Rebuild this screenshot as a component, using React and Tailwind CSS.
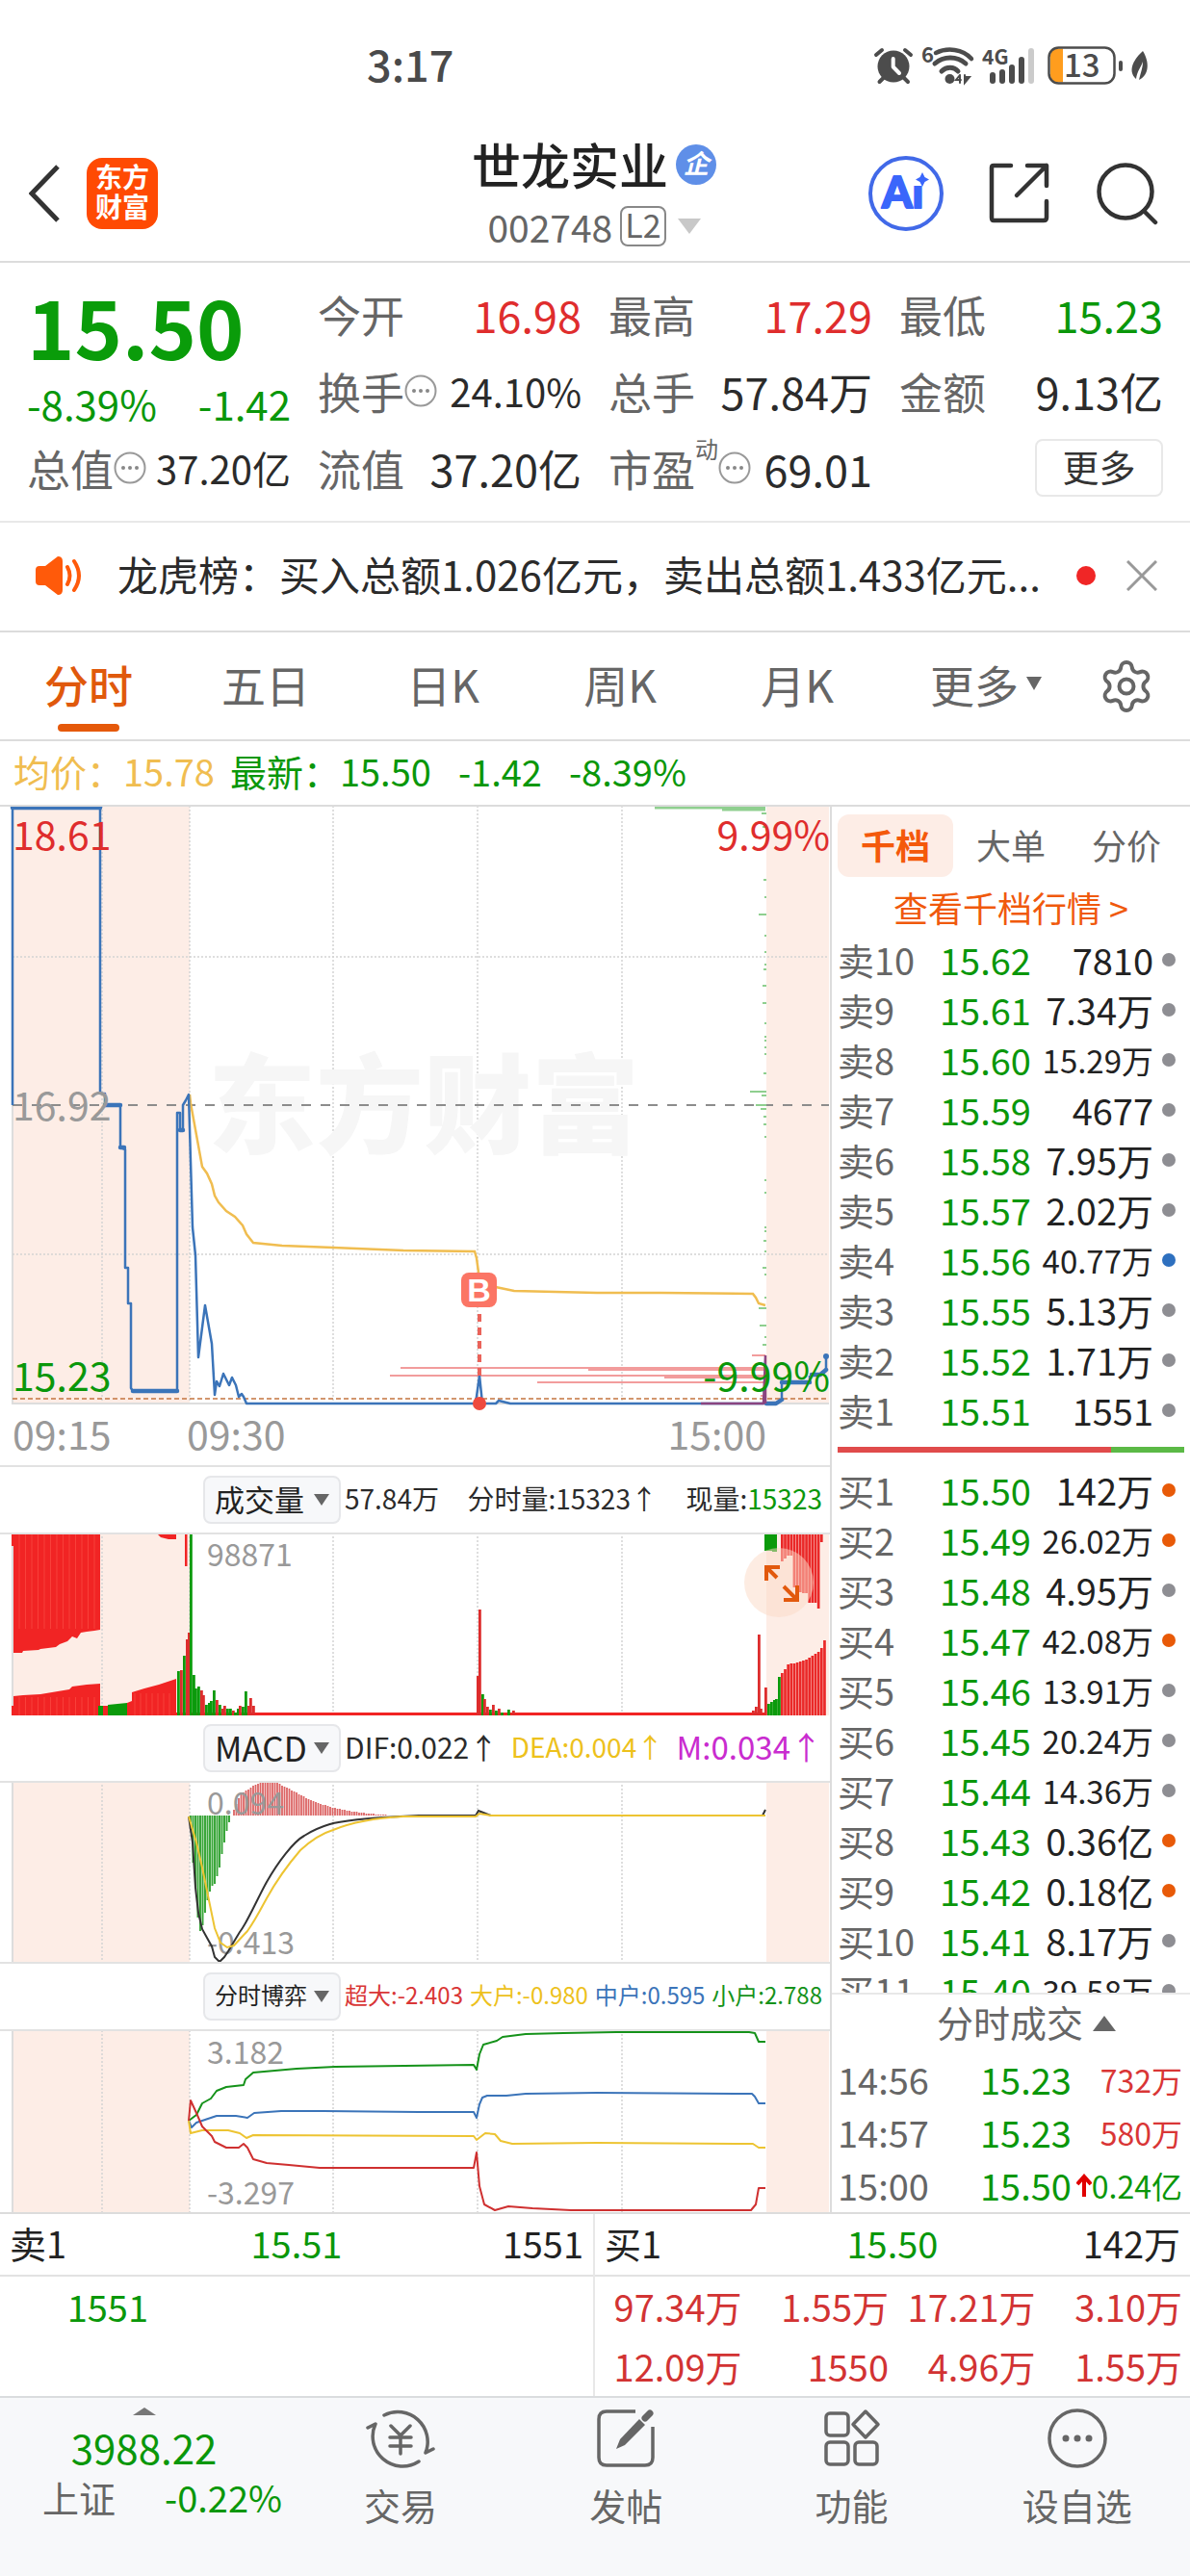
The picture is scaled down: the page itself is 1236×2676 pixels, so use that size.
import { Settings } from 'lucide-react';

const RED = '#df2d2d';
const GREEN = '#0a970a';
const BLUE = '#3b74b9';
const YELLOW = '#f0bd50';

const periods = ['分时', '五日', '日K', '周K', '月K'];

const sells = [
  ['卖10', '15.62', '7810', 'gray'],
  ['卖9', '15.61', '7.34万', 'gray'],
  ['卖8', '15.60', '15.29万', 'gray'],
  ['卖7', '15.59', '4677', 'gray'],
  ['卖6', '15.58', '7.95万', 'gray'],
  ['卖5', '15.57', '2.02万', 'gray'],
  ['卖4', '15.56', '40.77万', 'blue'],
  ['卖3', '15.55', '5.13万', 'gray'],
  ['卖2', '15.52', '1.71万', 'gray'],
  ['卖1', '15.51', '1551', 'gray'],
];

const buys = [
  ['买1', '15.50', '142万', 'orange'],
  ['买2', '15.49', '26.02万', 'orange'],
  ['买3', '15.48', '4.95万', 'gray'],
  ['买4', '15.47', '42.08万', 'orange'],
  ['买5', '15.46', '13.91万', 'gray'],
  ['买6', '15.45', '20.24万', 'gray'],
  ['买7', '15.44', '14.36万', 'gray'],
  ['买8', '15.43', '0.36亿', 'orange'],
  ['买9', '15.42', '0.18亿', 'orange'],
  ['买10', '15.41', '8.17万', 'gray'],
  ['买11', '15.40', '39.58万', 'gray'],
];

const dotColors = { gray: 'bg-[#8e8e93]', blue: 'bg-[#2e70bf]', orange: 'bg-[#e85a08]' };

const trades = [
  ['14:56', '15.23', '732万', false],
  ['14:57', '15.23', '580万', false],
  ['15:00', '15.50', '0.24亿', true],
];

const queue = ['97.34万', '1.55万', '17.21万', '3.10万', '12.09万', '1550', '4.96万', '1.55万'];

// price levels on the right edge: [y, length]
const levels = [
  [8, 5], [22, 4], [77, 3], [95, 2], [113, 8], [135, 2], [152, 2], [165, 2], [170, 3], [187, 4], [205, 4],
  [226, 2], [240, 2], [244, 2], [251, 2], [258, 2], [278, 3], [297, 17], [301, 5], [311, 11], [315, 6],
  [323, 3], [331, 3], [344, 2], [389, 2], [402, 2], [438, 2], [442, 2], [452, 3], [463, 2], [480, 4],
  [487, 2], [511, 2], [522, 8], [540, 7], [552, 2], [560, 4],
];

// volume bars: [x, top y, colour]
const volumeBars = [
  [184, 144, 'g'], [187, 143, 'r'], [190, 128, 'g'], [193, 111, 'r'], [195, 104, 'r'], [197, 0, 'g'],
  [200, 148, 'g'], [202, 162, 'g'], [205, 160, 'g'], [208, 164, 'r'], [210, 169, 'r'], [213, 179, 'g'],
  [216, 177, 'g'], [218, 175, 'g'], [221, 164, 'g'], [224, 174, 'r'], [227, 179, 'g'], [230, 183, 'r'],
  [232, 180, 'r'], [235, 183, 'g'], [238, 183, 'g'], [241, 185, 'r'], [243, 187, 'g'], [246, 183, 'g'],
  [248, 180, 'r'], [251, 181, 'g'], [254, 165, 'g'], [257, 180, 'r'], [259, 172, 'r'], [262, 180, 'r'],
  [495, 149, 'r'], [497, 80, 'r'], [500, 168, 'g'], [502, 173, 'r'], [505, 181, 'r'], [508, 184, 'g'],
  [511, 179, 'r'], [514, 185, 'g'], [517, 183, 'r'], [520, 187, 'g'], [527, 184, 'g'], [532, 185, 'r'],
  [781, 185, 'r'], [784, 181, 'r'], [787, 106, 'r'], [789, 183, 'r'], [794, 161, 'r'],
  [797, 178, 'g'], [800, 176, 'g'], [803, 174, 'g'], [805, 173, 'g'], [808, 150, 'g'],
];
const closeBars = [146, 142, 137, 136, 136, 135, 134, 133, 132, 130, 128, 126, 124, 120, 112];
const closeTops = [30, 27, 24, 24, 57, 60, 62, 63, 63, 73, 73, 73, 79, 10];

const macdGreen = [43, 85, 110, 142, 156, 150, 137, 124, 115, 109, 107, 99, 90, 76, 64, 52, 43];
const macdRed = [
  30, 24, 18, 14, 12, 10, 9, 7, 5, 4, 3, 2, 1, 0, 0, 0, 1, 1, 2, 3, 5, 6, 7, 8, 10, 11, 12, 14, 15, 16, 18,
  19, 20, 21, 22, 23, 24, 25, 25, 26, 27, 28, 28, 29, 29, 30, 30, 31, 31, 32, 32, 32, 33, 33, 33, 34, 34,
  34, 34, 35, 35, 35, 35, 35,
];

const navItems = [
  { label: '交易', icon: TradeIcon },
  { label: '发帖', icon: PostIcon },
  { label: '功能', icon: GridIcon },
  { label: '设自选', icon: MoreIcon },
];

function StatusIcons() {
  return (
    <svg className="h-[42px] w-[286px] overflow-visible" viewBox="0 0 286 42" fill="none" stroke="#4c4c4c" strokeLinecap="round">
      <circle cx="20" cy="22" r="16.5" fill="#4c4c4c" stroke="none" />
      <path d="M2 10L8 5M32 5L38 10M5.500 38L10 33.500M30.500 33.500L35 38" strokeWidth="4" />
      <path d="M19.700 14V22.500L26 29" stroke="#fff" strokeWidth="4" strokeLinejoin="round" />
      <path d="M64 8C76 2 92 4 101 14" strokeWidth="4.500" />
      <path d="M63 19C72 11 86 11 95 19M70 27C75 22 83 22 87 27" strokeWidth="5" />
      <circle cx="78.500" cy="35" r="5" fill="#4c4c4c" stroke="none" />
      <path d="M89 31L85 36H90M89 31V39" strokeWidth="2" />
      <path d="M94 31V39M94 39L99 33H94Z" strokeWidth="2" fill="#4c4c4c" />
      <g fill="#4c4c4c" stroke="none">
        <text x="49" y="18" className="text-[22px] font-bold">6</text>
        <text x="112" y="20" className="text-[21px] font-bold">4G</text>
        <rect x="120" y="28" width="6" height="12" rx="3" />
        <rect x="130" y="25" width="6" height="15" rx="3" />
        <rect x="140" y="20" width="6" height="20" rx="3" />
        <rect x="150" y="12" width="6" height="28" rx="3" />
        <rect x="160" y="3" width="6" height="37" rx="3" fill="#cbcbcb" />
        <rect x="254" y="16" width="4" height="11" rx="2" />
        <path d="M279 6C286 17 286 31 275 36C277 28 279 23 279 17C277 23 273 27 272 35C262 26 271 13 279 6Z" />
      </g>
      <path d="M192 3.500H196V38.500H192C186 38.500 183 35 183 31V11C183 7 186 3.500 192 3.500Z" fill="#ff9d1e" stroke="none" />
      <rect x="181.500" y="2.500" width="68" height="37" rx="10" strokeWidth="2.500" />
      <text x="197" y="33" fill="#4c4c4c" stroke="none" className="text-[33px] font-medium">13</text>
    </svg>
  );
}

function AiIcon() {
  return (
    <svg className="size-[78px]" viewBox="0 0 78 78">
      <circle cx="39" cy="39" r="37" fill="#fff" stroke="#4169e8" strokeWidth="4" />
      <text x="14" y="54" fill="#3a66fb" stroke="#3a66fb" strokeWidth="2" strokeLinejoin="round" className="font-['Lato'] text-[45px] font-black">Ai</text>
      <rect x="46" y="17" width="20" height="14" fill="#fff" />
      <path d="M56 17L58.500 22L63 24.500L58.500 27L56 32L53.500 27L49 24.500L53.500 22Z" fill="#3a66fb" />
    </svg>
  );
}

function TradeIcon() {
  return (
    <svg className="size-[72px]" viewBox="0 0 72 72" fill="none" stroke="#666" strokeWidth="3.500" strokeLinecap="round">
      <path d="M19 12A31 31 0 0 1 62 51L70 47M55 60A31 31 0 0 1 10 21L2 25" strokeLinejoin="round" />
      <path d="M26 23L36 33L46 23M36 33V52M25 35H47M25 44H47" />
    </svg>
  );
}

function PostIcon() {
  return (
    <svg className="size-[72px]" viewBox="0 0 72 72" fill="none" stroke="#666" strokeWidth="3.500">
      <path d="M46 8H16Q8 8 8 16V56Q8 64 16 64H56Q64 64 64 56V24" />
      <path d="M50 16L56 22L35 43L26 47L30 37Z" fill="#666" stroke="none" />
      <path d="M56 15L61 10" strokeWidth="7" strokeLinecap="round" />
    </svg>
  );
}

function GridIcon() {
  return (
    <svg className="size-[72px]" viewBox="0 0 72 72" fill="none" stroke="#666" strokeWidth="3.500" strokeLinejoin="round">
      <rect x="9" y="10" width="23" height="23" rx="4" />
      <rect x="9" y="40" width="23" height="23" rx="4" />
      <rect x="39" y="40" width="23" height="23" rx="4" />
      <path d="M50 8L63 21.500L50 35L37 21.500Z" />
    </svg>
  );
}

function MoreIcon() {
  return (
    <svg className="size-[72px]" viewBox="0 0 72 72" fill="none" stroke="#666" strokeWidth="3.500">
      <circle cx="36" cy="36" r="29" />
      <g fill="#666" stroke="none">
        <circle cx="24" cy="36" r="3.500" />
        <circle cx="36" cy="36" r="3.500" />
        <circle cx="48" cy="36" r="3.500" />
      </g>
    </svg>
  );
}

function InfoDots() {
  return (
    <svg className="size-[34px] shrink-0" viewBox="0 0 34 34">
      <circle cx="17" cy="17" r="15.500" fill="none" stroke="#999" strokeWidth="2" />
      <g fill="#888">
        <circle cx="10" cy="17" r="2" />
        <circle cx="17" cy="17" r="2" />
        <circle cx="24" cy="17" r="2" />
      </g>
    </svg>
  );
}

function Triangle({ className, up }) {
  return (
    <svg className={className} viewBox="0 0 20 14" preserveAspectRatio="none" fill="currentColor">
      <path d={up ? 'M0 14L10 0L20 14Z' : 'M0 0L10 14L20 0Z'} />
    </svg>
  );
}

function Stat({ label, value, tone = 'text-[#2b2b2b]', size = 'text-[45px]', info, sup }) {
  return (
    <div className="flex h-20 items-center text-[45px] text-[#666]">
      <span>{label}</span>
      {sup && <span className="mt-2 self-start text-[24px]">{sup}</span>}
      {info && <InfoDots />}
      <span className={`ml-auto ${size} ${tone}`}>{value}</span>
    </div>
  );
}

function Header() {
  return (
    <header className="flex h-[137px] items-center border-b-2 border-[#dcdcdc] pr-8 pb-1.5 pl-[30px]">
      <div className="flex flex-1 items-center gap-7">
        <button aria-label="返回">
          <svg className="h-[60px] w-8" viewBox="0 0 32 60" fill="none" stroke="#333" strokeWidth="5">
            <path d="M30 2L3 30L30 58" />
          </svg>
        </button>
        <div className="flex size-[74px] flex-col items-center justify-center rounded-2xl bg-[#ff4a03] pb-1 text-[28px] leading-[31px] font-bold text-white">
          <span>东方</span>
          <span>财富</span>
        </div>
      </div>
      <div className="flex flex-col items-center gap-[18px]">
        <div className="flex items-center gap-2">
          <h1 className="text-[51px] font-medium text-[#222]">世龙实业</h1>
          <span className="flex size-[42px] items-center justify-center rounded-full bg-[#5f8fe8] pb-1 text-[27px] font-bold text-white italic">企</span>
        </div>
        <button className="flex items-center gap-2 text-[39px] text-[#666]">
          002748
          <span className="rounded-lg border-2 border-[#888] px-[3px] pb-1 text-[34px]">L2</span>
          <Triangle className="ml-1 h-4 w-6 text-[#c8c8c8]" />
        </button>
      </div>
      <div className="flex flex-1 items-center justify-end gap-[46px]">
        <button aria-label="AI">
          <AiIcon />
        </button>
        <button aria-label="分享">
          <svg className="size-[66px]" viewBox="0 0 66 66" fill="none" stroke="#333" strokeWidth="4.500" strokeLinecap="round" strokeLinejoin="round">
            <path d="M24 4H6Q4 4 4 6V58Q4 61 6 61H58Q61 61 61 58V41M41 4H61V25M61 4L30 35" />
          </svg>
        </button>
        <button aria-label="搜索">
          <svg className="size-[66px]" viewBox="0 0 66 66" fill="none" stroke="#333" strokeWidth="4.500" strokeLinecap="round">
            <circle cx="31" cy="31" r="27.500" />
            <path d="M50 51L62 63" />
          </svg>
        </button>
      </div>
    </header>
  );
}

function Quote() {
  return (
    <section className="grid grid-cols-4 gap-x-7 border-b-2 border-[#e8e8e8] px-7 pt-[13px] pb-[15px]">
      <div>
        <div className="h-[112px] pt-2.5 text-[84px] font-bold text-[#0a9c0a]">15.50</div>
        <div className="flex h-12 justify-between text-[42px] text-[#0a970a]">
          <span>-8.39%</span>
          <span>-1.42</span>
        </div>
        <Stat label="总值" value="37.20亿" size="text-[40px]" info />
      </div>
      <div>
        <Stat label="今开" value="16.98" tone="text-[#df2d2d]" />
        <Stat label="换手" value="24.10%" size="text-[40px]" info />
        <Stat label="流值" value="37.20亿" />
      </div>
      <div>
        <Stat label="最高" value="17.29" tone="text-[#df2d2d]" />
        <Stat label="总手" value="57.84万" />
        <Stat label="市盈" value="69.01" sup="动" info />
      </div>
      <div>
        <Stat label="最低" value="15.23" tone="text-[#0a970a]" />
        <Stat label="金额" value="9.13亿" />
        <div className="flex h-20 items-center justify-end">
          <button className="h-[60px] w-[133px] rounded-lg border-2 border-[#e8e8e8] pb-1 text-[38px] text-[#333]">更多</button>
        </div>
      </div>
    </section>
  );
}

function Ticker() {
  return (
    <section className="flex h-[114px] items-center border-b-2 border-[#dcdcdc] pr-[34px] pb-0.5 pl-9">
      <svg className="h-10 w-[50px] shrink-0" viewBox="0 0 50 40" fill="#ff5a0a">
        <path d="M5 10H11L24 0Q29 0 29 5V35Q29 40 24 40L11 30H5Q1 30 1 26V14Q1 10 5 10Z" />
        <path d="M34 11Q39 20 34 29M41 5Q51 20 41 35" fill="none" stroke="#ff5a0a" strokeWidth="4" strokeLinecap="round" />
      </svg>
      <p className="ml-9 min-w-0 flex-1 pb-1 text-[42px] whitespace-nowrap text-[#2b2b2b]">龙虎榜：买入总额1.026亿元，卖出总额1.433亿元...</p>
      <span className="size-5 rounded-full bg-[#f02626]" />
      <button aria-label="关闭" className="ml-8">
        <svg className="size-8" viewBox="0 0 32 32" stroke="#999" strokeWidth="3">
          <path d="M1 1L31 31M31 1L1 31" />
        </svg>
      </button>
    </section>
  );
}

function PeriodTabs() {
  return (
    <nav className="flex h-[113px] items-stretch border-b-2 border-[#dcdcdc] text-[46px] text-[#666]">
      {periods.map((p, i) => (
        <button key={p} className={`relative flex-1 pb-1.5 ${i === 0 ? 'font-medium text-[#e0590c]' : ''}`}>
          {p}
          {i === 0 && <span className="absolute bottom-2 left-1/2 h-2 w-16 -translate-x-1/2 rounded-full bg-[#e5590a]" />}
        </button>
      ))}
      <button className="flex-1 pb-1.5">
        <span className="relative">
          更多
          <Triangle className="absolute top-1/2 left-full ml-2 h-3.5 w-4 -translate-y-1/2" />
        </span>
      </button>
      <button aria-label="设置" className="flex w-[132px] items-center justify-center">
        <Settings size={60} strokeWidth={1.6} />
      </button>
    </nav>
  );
}

function Frame({ height, full }) {
  return (
    <g>
      <rect x="13" y="0" width="184" height={height} fill="#fdede6" />
      <rect x="796" y="0" width="65" height={height} fill="#fdede6" />
      <path d={`M106 0V${height}M197 0V${height}M346 0V${height}M496 0V${height}M646 0V${height}`} stroke="#d4d4d4" strokeWidth="1.500" strokeDasharray="2 2" />
      <path d={full ? `M13 2V${height}H861` : `M13 0V${height}`} fill="none" stroke="#ddd" strokeWidth="2" />
    </g>
  );
}

function PriceChart() {
  return (
    <svg className="block w-full border-b-2 border-[#e2e2e2]" viewBox="0 1 862 684" fill="none">
      <Frame height={621} full />
      <path d="M13 157H861M13 466H861" stroke="#d4d4d4" strokeWidth="1.500" strokeDasharray="2 2" />
      <text x="216" y="353" fill="#f6f6f6" className="text-[112px] font-black">东方财富</text>
      <path d="M13 311H861" stroke="#8c8c8c" strokeWidth="2" strokeDasharray="10 10" />

      <g stroke="#8fcf8f" strokeWidth="2">
        <path d="M680 2H795M750 4H795" strokeWidth="3" />
        {levels.map(([y, len]) => (
          <path key={y} d={`M${796 - len} ${y}H796`} />
        ))}
      </g>
      <g stroke="#f29c9c" strokeWidth="2">
        <path d="M416 584H795M405 592H795M558 599H795M781 571H795M792 608H796M790 613H796" />
        <path d="M611 585H795M690 593H795" strokeWidth="4" />
      </g>
      <path d="M13 616H861" stroke="#c4743f" strokeWidth="1.500" strokeDasharray="5 3" />

      <polyline
        points="197,300 198,309 204,342 210,375 215,382 220,393 223,405 227,412 235,421 244,427 252,436 256,445 263,454 293,457 346,459 419,462 493,463 495,470 498,492 510,499 534,504 620,506 687,506 782,507 785,511 788,517 795,519"
        stroke={YELLOW}
        strokeWidth="2.500"
      />
      <g stroke={BLUE} strokeWidth="2.500" strokeLinejoin="round">
        <polyline points="13,311 13,2 104,2 104,299 109,299 109,311 125,311 125,355 130,357 130,480 133,480 133,517 136,517 136,605 138,608 184,608 184,319 187,319 187,337 190,337 190,311 193,306 196,300 200,438 203,467 206,573 213,519 220,559 223,612 225,598 228,603 232,590 238,602 241,594 245,602 248,614 251,611 253,614 256,621 494,621 498,592 501,621 515,621 518,618 530,621 793,621" />
        <path d="M13 2H104M109 311H125M138 608H184M187 337H190M125 355H129M796 621H806L812 617M812 599H841M843 591H852L858 586" strokeWidth="4.500" strokeLinecap="round" />
        <path d="M812 617V599M841 599V592M858 586V572" />
      </g>
      <path d="M728 621H793L795 571V621" stroke="#8a4480" strokeWidth="2.500" />
      <circle cx="858" cy="572" r="3" fill={BLUE} />

      <path d="M498 528V592" stroke="#ea635a" strokeWidth="4" strokeDasharray="8 6" />
      <circle cx="498" cy="621" r="7" fill="#ee4a3f" />
      <rect x="479" y="485" width="37" height="36" rx="8" fill="#fb7565" />
      <text x="497.500" y="515" fill="#fff" textAnchor="middle" className="font-['Liberation_Sans'] text-[34px] font-bold">B</text>

      <g className="text-[41px]">
        <text x="13" y="46" fill={RED}>18.61</text>
        <text x="862" y="46" fill={RED} textAnchor="end">9.99%</text>
        <text x="13" y="327" fill="#999">16.92</text>
        <text x="13" y="608" fill={GREEN}>15.23</text>
        <text x="862" y="608" fill={GREEN} textAnchor="end">-9.99%</text>
        <text x="13" y="669" fill="#999">09:15</text>
        <text x="194" y="669" fill="#999">09:30</text>
        <text x="796" y="669" fill="#999" textAnchor="end">15:00</text>
      </g>
    </svg>
  );
}

function IndicatorHead({ name, nameSize, size, children }) {
  return (
    <div className={`flex h-[68px] items-center pr-2 pl-[211px] ${size}`}>
      <button className={`mr-1 flex h-[50px] w-[143px] shrink-0 items-center justify-between rounded-lg border-2 border-[#e6e7ea] bg-[#f7f8fa] px-2.5 text-[#222] ${nameSize}`}>
        <span className="pb-1">{name}</span>
        <Triangle className="h-3 w-4 text-[#666]" />
      </button>
      <div className="flex flex-1 items-center justify-between pb-1 whitespace-nowrap">{children}</div>
    </div>
  );
}

function VolumeChart() {
  return (
    <div className="relative">
      <svg className="block w-full border-t-2 border-[#e2e2e2]" viewBox="0 2 862 188">
        <Frame height={190} />
        <g fill="#f12424">
          <path d="M12 0H104V101L98 102L90 103L84 104L80 110L75 108L70 113L62 116L58 119L42 121L40 122L24 123L23 125H14V14H12Z" />
          <path d="M12 190V180H14V170L24 169L42 168L60 165L72 163L75 160L90 158L104 157V190Z" />
          <path d="M107 190V180H112V190ZM132 190V177L137 175V166L150 162L165 158L183 152V190Z" />
          <path d="M137 0H183V7H175L167 5L164 2L137 1ZM192 0H194.500V35H192ZM13 187H795V190H13Z" />
        </g>
        <path d="M102 190V180H107V190ZM112 190V179L132 177V190ZM797 0H807V20H802V19H794V0Z" fill="#0b9a0b" />
        <g stroke="#ff5c50" strokeWidth="1" opacity="0.5">
          {Array.from({ length: 13 }, (_, i) => (
            <path key={i} d={`M${20 + i * 6.5} 0V100M${20 + i * 6.5} 171V190`} />
          ))}
          {Array.from({ length: 7 }, (_, i) => (
            <path key={i} d={`M${140 + i * 6} 167V190`} />
          ))}
        </g>
        {volumeBars.map(([x, y, c]) => (
          <rect key={x} x={x} y={y} width="2.800" height={190 - y} fill={c === 'g' ? '#0b9a0b' : '#dd2c2c'} />
        ))}
        {closeBars.map((y, i) => (
          <rect key={i} x={811 + i * 3.15} y={y} width="2.700" height={190 - y} fill="#ea2828" />
        ))}
        {closeTops.map((h, i) => (
          <rect key={i} x={811 + i * 3.15} y="0" width="2.700" height={h} fill="#ea2828" />
        ))}
        <text x="215" y="35" fill="#999" className="text-[32px]">98871</text>
      </svg>
      <button aria-label="全屏" className="absolute top-4 right-[17px] size-[72px] rounded-full bg-[#fbd9c6]/50">
        <svg viewBox="0 0 72 72" fill="none" stroke="#e2590d" strokeWidth="4">
          <path d="M37 20H23V34M23 20L34 31M41 54H55V39M55 54L41 40" />
        </svg>
      </button>
    </div>
  );
}

function MacdChart() {
  return (
    <svg className="block w-full border-y-2 border-[#e2e2e2]" viewBox="0 2 862 186" fill="none">
      <Frame height={190} />
      <g stroke="#3aa63a" strokeWidth="2">
        {macdGreen.map((y, i) => (
          <path key={i} d={`M${198 + i * 2.5} 36V${y}`} />
        ))}
      </g>
      <g stroke="#dc6464" strokeWidth="1.800">
        {macdRed.map((y, i) => (
          <path key={i} d={`M${243 + i * 2.5} 36V${y}`} />
        ))}
      </g>
      <g fill="#999" className="text-[32px]">
        <text x="215" y="35">0.094</text>
        <text x="215" y="180">-0.413</text>
      </g>
      <path d="M196 37L200 64L203 111L206 137L210 154L215 163L220 172L223 183L228 188L233 183L237 177L249 157C257 147 267 123 277 105C289 84 305 63 316 57C330 48 340 46 346 44C370 39 410 37 435 36H494L497 31L502 33L510 36H792L795 30" stroke="#333" strokeWidth="2" />
      <path d="M196 37L204 64L210 90L217 124L223 153L229 168L236 173L243 171L257 156C265 145 271 133 277 122C288 102 300 86 312 72C324 61 336 54 346 51C370 41 400 38 419 37H494L498 34L510 36H795" stroke="#edc432" strokeWidth="2" />
    </svg>
  );
}

function FlowChart() {
  return (
    <svg className="block w-full border-t-2 border-[#e2e2e2]" viewBox="0 1 862 188" fill="none" strokeWidth="2" strokeLinejoin="round">
      <Frame height={190} />
      <polyline stroke="#15921a" points="196,94 204,88 210,76 219,71 225,63 235,59 253,57 255,51 263,44 308,40 348,38 492,36 495,41 498,25 502,15 516,11 522,7 546,4 585,3 640,2 778,2 784,3 788,12 795,12" />
      <polyline stroke={BLUE} points="196,94 199,101 204,96 225,89 245,89 257,91 264,86 292,84 336,84 435,85 492,85 495,91 498,77 501,70 506,68 526,68 546,66 620,65 781,66 784,69 788,76 795,76" />
      <polyline stroke="#edc432" points="196,94 198,107 210,104 237,104 249,107 256,112 263,109 492,110 495,114 504,107 514,108 520,115 532,118 620,117 782,118 788,122 795,122" />
      <polyline stroke="#cf3030" points="196,94 198,73 204,86 210,100 220,110 223,116 235,122 248,122 253,118 257,122 263,134 277,138 300,140 332,143 492,143 495,127 498,162 503,181 514,187 528,183 553,185 593,187 780,187 785,181 788,164 795,164" />
      <g fill="#999" className="text-[32px]">
        <text x="215" y="35">3.182</text>
        <text x="215" y="181">-3.297</text>
      </g>
    </svg>
  );
}

function BookTable({ rows, label }) {
  return (
    <table aria-label={label} className="w-full table-fixed text-left text-[38px]">
      <tbody>
        {rows.map(([name, price, vol, dot]) => (
          <tr key={name} className="h-[52px]">
            <td className="w-[106px] pb-1 text-[#666]">{name}</td>
            <td className="w-[96px] pb-1 text-[#0a970a]">{price}</td>
            <td className={`pb-1 text-right text-[#222] ${vol.length > 5 ? 'text-[33px]' : ''}`}>{vol}</td>
            <td className="w-[30px] pb-1">
              <span className={`mr-[7px] ml-auto block size-3.5 rounded-full ${dotColors[dot]}`} />
            </td>
          </tr>
        ))}
      </tbody>
    </table>
  );
}

function OrderBook() {
  return (
    <aside className="flex w-[374px] shrink-0 flex-col border-l-2 border-[#dcdcdc]">
      <div className="grid grid-cols-3 px-1.5 pt-2 text-[36px] text-[#666]">
        <button className="h-[65px] rounded-xl bg-[#fdede6] pb-1 font-bold text-[#f4590b]">千档</button>
        <button className="pb-1">大单</button>
        <button className="pb-1">分价</button>
      </div>
      <a href="#depth" className="flex h-[62px] items-center justify-center text-[36px] text-[#f0590c]">查看千档行情 &gt;</a>
      <div className="pr-2 pl-1.5">
        <BookTable rows={sells} label="卖盘" />
      </div>
      <div className="mx-1.5 mt-2.5 mb-[15px] flex h-1.5 bg-[#5bb946]">
        <div className="w-[79%] bg-[#e04b4b]" />
      </div>
      <div className="h-[546px] overflow-hidden pr-2 pl-1.5">
        <BookTable rows={buys} label="买盘" />
      </div>
      <button className="flex h-[62px] items-center justify-center gap-2.5 border-t-2 border-[#e8e8e8] pl-8 text-[38px] text-[#666]">
        <span className="pb-1">分时成交</span>
        <Triangle up className="h-4 w-6" />
      </button>
      <table aria-label="分时成交" className="ml-1.5 table-fixed text-left text-[38px]">
        <tbody>
          {trades.map(([time, price, vol, up]) => (
            <tr key={time} className="h-[55px]">
              <td className="w-[148px] text-[#666]">{time}</td>
              <td className="w-[96px] text-[#0a970a]">{price}</td>
              <td className={`pr-2 text-[32px] whitespace-nowrap ${up ? 'text-[#0a970a]' : 'text-[#d93636]'}`}>
                <span className="flex items-center justify-end">
                  {up && (
                    <svg className="h-6 w-4 shrink-0" viewBox="0 0 16 24" fill="none" stroke="#e00000" strokeWidth="4">
                      <path d="M8 24V3M1 11L8 3L15 11" />
                    </svg>
                  )}
                  {vol}
                </span>
              </td>
            </tr>
          ))}
        </tbody>
      </table>
    </aside>
  );
}

function Queue() {
  return (
    <section className="grid grid-cols-2 border-t-2 border-[#dcdcdc] text-[38px]">
      <div className="border-r-2 border-[#e8e8e8]">
        <div className="grid h-[65px] grid-cols-3 items-center border-b-2 border-[#e2e2e2] px-2.5 pb-1 text-[#222]">
          <span>卖1</span>
          <span className="text-center text-[#0a970a]">15.51</span>
          <span className="text-right">1551</span>
        </div>
        <div className="grid grid-cols-4 text-right leading-[62px] text-[#0a970a]">
          <span>1551</span>
        </div>
      </div>
      <div>
        <div className="grid h-[65px] grid-cols-3 items-center border-b-2 border-[#e2e2e2] px-2.5 pb-1 text-[#222]">
          <span>买1</span>
          <span className="text-center text-[#0a970a]">15.50</span>
          <span className="text-right">142万</span>
        </div>
        <div className="grid grid-cols-4 pr-2 text-right leading-[62px] text-[#d23333]">
          {queue.map((q, i) => (
            <span key={i}>{q}</span>
          ))}
        </div>
      </div>
    </section>
  );
}

function BottomNav() {
  return (
    <nav className="flex h-[188px] border-t-2 border-[#dadcde] bg-[#f7f8fa] text-[38px] text-[#666]">
      <button className="flex w-[299px] flex-col items-center pt-2.5 text-[#0a970a]">
        <Triangle up className="h-2 w-6 text-[#777]" />
        <span className="mt-3 text-[42px]">3988.22</span>
        <span className="mt-3 flex w-full justify-between pr-1.5 pl-11">
          <span className="text-[#666]">上证</span>
          <span>-0.22%</span>
        </span>
      </button>
      {navItems.map(({ label, icon: Icon }) => (
        <button key={label} className="flex flex-1 flex-col items-center gap-3.5 pt-1.5">
          <Icon />
          {label}
        </button>
      ))}
    </nav>
  );
}

export default function App() {
  return (
    <div className="min-h-screen bg-white font-['Noto_Sans_CJK_SC',sans-serif] leading-none">
      <div className="flex h-[136px] items-center justify-between pr-[42px] pl-[381px] text-[45px] font-medium text-[#4a4a4a]">
        <span className="pb-1.5">3:17</span>
        <StatusIcons />
      </div>
      <Header />
      <Quote />
      <Ticker />
      <PeriodTabs />
      <div className="flex h-[68px] items-center border-b-2 border-[#dcdcdc] px-3.5 pb-1 text-[38px] text-[#0a970a]">
        <span className="mr-4 text-[#f0bd50]">均价：15.78</span>
        <span className="mr-7">最新：15.50</span>
        <span className="mr-7">-1.42</span>
        <span>-8.39%</span>
      </div>
      <main className="flex">
        <div className="min-w-0 flex-1">
          <PriceChart />
          <IndicatorHead name="成交量" nameSize="text-[31px]" size="text-[28px] text-[#2b2b2b]">
            <span>57.84万</span>
            <span>分时量:15323↑</span>
            <span>
              现量:<span className="text-[#0a970a]">15323</span>
            </span>
          </IndicatorHead>
          <VolumeChart />
          <IndicatorHead name="MACD" nameSize="text-[35px]" size="text-[30px]">
            <span className="text-[#2b2b2b]">DIF:0.022↑</span>
            <span className="text-[28px] text-[#edc11c]">DEA:0.004↑</span>
            <span className="text-[33px] text-[#c92ccf]">M:0.034↑</span>
          </IndicatorHead>
          <MacdChart />
          <IndicatorHead name="分时博弈" nameSize="text-[24px]" size="text-[24px]">
            <span className="text-[#d93636]">超大:-2.403</span>
            <span className="text-[#edc11c]">大户:-0.980</span>
            <span className="text-[#3b74b9]">中户:0.595</span>
            <span className="text-[#15921a]">小户:2.788</span>
          </IndicatorHead>
          <FlowChart />
        </div>
        <OrderBook />
      </main>
      <Queue />
      <BottomNav />
    </div>
  );
}
